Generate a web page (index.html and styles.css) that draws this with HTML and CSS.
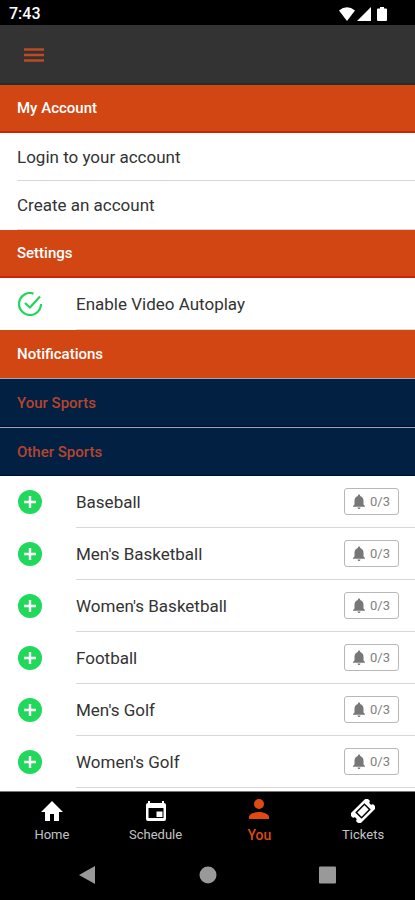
FILE: index.html
```html
<!DOCTYPE html>
<html lang="en">
<head>
<meta charset="utf-8">
<meta name="viewport" content="width=device-width, initial-scale=1">
<title>You</title>
<link rel="stylesheet" href="styles.css">
</head>
<body>
<svg class="defs" aria-hidden="true">
  <symbol id="plus" viewBox="0 0 24 24"><circle cx="12" cy="12" r="12" fill="#20d85a"/><path d="M12 6v12M6 12h12" stroke="#fff" stroke-width="2.4"/></symbol>
  <symbol id="bell" viewBox="4 2 16 20"><path d="M12 22c1.1 0 2-.9 2-2h-4c0 1.1.9 2 2 2zm6-6v-5c0-3.07-1.64-5.64-4.5-6.32V4c0-.83-.67-1.5-1.5-1.5s-1.5.67-1.5 1.5v.68C7.63 5.36 6 7.92 6 11v5l-2 2v1h16v-1l-2-2z"/></symbol>
</svg>
<div class="status">
  <span>7:43</span>
  <span class="signals">
    <svg width="16" height="14" viewBox="0 0 16 14"><path d="M0 3.5Q8-3 16 3.5L8 14z"/></svg>
    <svg width="14" height="14" viewBox="0 0 14 14"><path d="M0 14L14 0v14z"/></svg>
    <svg width="10" height="14" viewBox="0 0 10 14"><path d="M3 0h4v1.5h2q1 0 1 1V13q0 1-1 1H1q-1 0-1-1V2.5q0-1 1-1h2z"/></svg>
  </span>
</div>
<header class="toolbar">
  <button class="menu" aria-label="Menu"><svg width="20" height="16" viewBox="0 0 20 16"><path d="M0 2.5h20M0 8h20M0 13.5h20" stroke="#bd4b23" stroke-width="2.6"/></svg></button>
</header>
<main class="content">
  <h2 class="section">My Account</h2>
  <a class="link" href="#login"><span>Login to your account</span></a>
  <a class="link" href="#create"><span>Create an account</span></a>
  <h2 class="section">Settings</h2>
  <button class="row autoplay" aria-pressed="true">
    <svg class="mark" viewBox="0 0 24 24" fill="none" stroke="#24d45c" stroke-width="2.2"><path d="M15.5 1.6A11 11 0 1 0 23 12"/><path d="M7 11l5 4.5L22 4.5"/></svg>
    <span class="label">Enable Video Autoplay</span>
  </button>
  <h2 class="section plain">Notifications</h2>
  <h3 class="section sub">Your Sports</h3>
  <h3 class="section sub">Other Sports</h3>
  <ul class="sports">
    <li class="row"><button class="add" aria-label="Add Baseball"><svg class="mark"><use href="#plus"/></svg></button><div class="label"><span>Baseball</span><button class="alerts"><svg><use href="#bell"/></svg>0/3</button></div></li>
    <li class="row"><button class="add" aria-label="Add Men's Basketball"><svg class="mark"><use href="#plus"/></svg></button><div class="label"><span>Men's Basketball</span><button class="alerts"><svg><use href="#bell"/></svg>0/3</button></div></li>
    <li class="row"><button class="add" aria-label="Add Women's Basketball"><svg class="mark"><use href="#plus"/></svg></button><div class="label"><span>Women's Basketball</span><button class="alerts"><svg><use href="#bell"/></svg>0/3</button></div></li>
    <li class="row"><button class="add" aria-label="Add Football"><svg class="mark"><use href="#plus"/></svg></button><div class="label"><span>Football</span><button class="alerts"><svg><use href="#bell"/></svg>0/3</button></div></li>
    <li class="row"><button class="add" aria-label="Add Men's Golf"><svg class="mark"><use href="#plus"/></svg></button><div class="label"><span>Men's Golf</span><button class="alerts"><svg><use href="#bell"/></svg>0/3</button></div></li>
    <li class="row"><button class="add" aria-label="Add Women's Golf"><svg class="mark"><use href="#plus"/></svg></button><div class="label"><span>Women's Golf</span><button class="alerts"><svg><use href="#bell"/></svg>0/3</button></div></li>
  </ul>
</main>
<nav class="tabs">
  <a href="#home"><svg viewBox="0 0 24 24"><path d="M10 22v-7h4v7h5v-9h4L12 2 1 13h4v9z"/></svg>Home</a>
  <a href="#schedule"><svg viewBox="0 0 24 24"><path fill-rule="evenodd" d="M4 2h2v2h12V2h2v2q2 0 2 2v14q0 2-2 2H4q-2 0-2-2V6q0-2 2-2zM4.500 9v10h15V9z"/><path d="M12.500 12.500h6v5.500h-6z"/></svg>Schedule</a>
  <a href="#you" class="active" aria-current="page"><svg viewBox="0 0 24 24"><circle cx="12" cy="5" r="5"/><path d="M2 20v-2c0-3.300 6.700-5 10-5s10 1.700 10 5v2z"/></svg>You</a>
  <a href="#tickets"><svg viewBox="0 0 24 24"><g transform="rotate(-45 12 12)"><path fill-rule="evenodd" d="M1 5h22q1 0 1 1v4a2 2 0 0 0 0 4v4q0 1-1 1H1q-1 0-1-1v-4a2 2 0 0 0 0-4V6q0-1 1-1zM5.500 7.500v9h13v-9z"/><path d="M7 9h10v6H7z"/></g></svg>Tickets</a>
</nav>
<div class="system">
  <button aria-label="Back"><svg viewBox="0 0 18 18"><path d="M0 9L16 0v18z"/></svg></button>
  <button aria-label="Home screen"><svg viewBox="0 0 18 18"><circle cx="9" cy="9" r="8.500"/></svg></button>
  <button aria-label="Recent apps"><svg viewBox="0 0 18 18"><rect x="0" y="0.500" width="17" height="17" rx="1"/></svg></button>
</div>
</body>
</html>
```
FILE: styles.css
```css
* { box-sizing: border-box; }

body {
  margin: 0;
  height: 100vh;
  display: flex;
  flex-direction: column;
  background: #fff;
  color: #333;
  font-family: Roboto, sans-serif;
  font-size: 17px;
}

button {
  font: inherit;
  color: inherit;
  background: none;
  border: 0;
  padding: 0;
}

a { color: inherit; text-decoration: none; }
svg { display: block; }
.defs { display: none; }

.status {
  flex: none;
  height: 25px;
  padding: 2px 28px 0 9px;
  display: flex;
  align-items: center;
  justify-content: space-between;
  background: #000;
  color: #fff;
  font-size: 16px;
  font-weight: 500;
}

.signals { display: flex; gap: 2px; fill: #fff; }
.signals svg:last-child { margin-left: 4px; }

.toolbar {
  flex: none;
  height: 60px;
  padding: 2px 24px 0;
  display: flex;
  align-items: center;
  background: #333;
  border-bottom: 2px solid #24302f;
}

.content { flex: 1; min-height: 0; overflow: hidden; }

.section {
  margin: 0;
  height: 48px;
  padding: 0 17px;
  display: flex;
  align-items: center;
  background: #d14613;
  border-bottom: 2px solid #cc2408;
  color: #fff;
  font-size: 15px;
  font-weight: 500;
}

.section.plain { border-bottom: 0; }

.section.sub {
  height: 49px;
  background: #022042;
  border-top: 1px solid #a3a5b5;
  border-bottom: 1px solid #010b35;
  color: #b5452f;
}

.link { display: block; padding-left: 17px; }

.link span {
  height: 49px;
  display: flex;
  align-items: center;
  border-bottom: 1px solid #d8d8d8;
}

.link:first-of-type span { height: 48px; }

.row {
  width: 100%;
  height: 52px;
  padding-left: 18px;
  display: flex;
  align-items: center;
  text-align: left;
}

.mark { width: 24px; height: 24px; flex: none; }

.label {
  flex: 1;
  align-self: stretch;
  margin-left: 34px;
  padding-right: 16px;
  display: flex;
  align-items: center;
  justify-content: space-between;
  border-bottom: 1px solid #d8d8d8;
}

.sports { margin: 0; padding: 0; list-style: none; }

.alerts {
  width: 55px;
  height: 27px;
  display: flex;
  align-items: center;
  justify-content: center;
  gap: 5px;
  border: 1px solid #b8b8b8;
  border-radius: 3px;
  color: #808080;
  font-size: 13px;
}

.alerts svg { width: 12px; height: 15px; fill: #777; }

.tabs {
  flex: none;
  height: 59px;
  display: grid;
  grid-template-columns: repeat(4, 1fr);
  background: #000;
  border-top: 1px solid #777;
  color: #c4c4c4;
  font-size: 13px;
}

.tabs a {
  display: flex;
  flex-direction: column;
  align-items: center;
  padding-top: 7px;
  gap: 4px;
  line-height: 16px;
}

.tabs svg { width: 24px; height: 24px; fill: #fff; }
.tabs .active { color: #df4a14; font-size: 14px; font-weight: 500; }
.tabs .active svg { fill: #df4a14; }

.system {
  flex: none;
  height: 50px;
  display: flex;
  justify-content: center;
  gap: 102px;
  background: #000;
}

.system svg { width: 18px; height: 18px; fill: #999; }
```
